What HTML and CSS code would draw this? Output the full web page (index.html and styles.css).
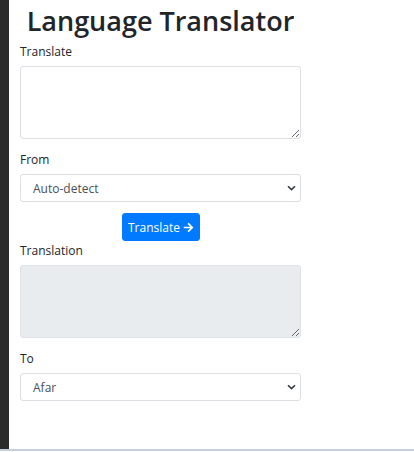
FILE: index.html
```html
<!DOCTYPE html>
<html lang="en">
<head>
<meta charset="utf-8">
<title>Language Translator</title>
<link rel="stylesheet" href="styles.css">
</head>
<body>
<div class="frame">
  <div class="sidebar"></div>
  <main class="content">
    <h1 class="title">Language Translator</h1>
    <div class="group">
      <label class="label">Translate</label>
      <textarea class="field area"></textarea>
    </div>
    <div class="group">
      <label class="label">From</label>
      <div class="select">
        <span>Auto-detect</span>
        <svg class="chev" width="9" height="6" viewBox="0 0 9 6"><path d="M1 1.2 L4.5 4.6 L8 1.2" fill="none" stroke="#343a40" stroke-width="1.6"/></svg>
      </div>
    </div>
    <div class="btnrow">
      <button class="btn">Translate
        <svg class="arrow" width="11" height="11" viewBox="0 0 448 512"><path fill="#fff" d="M190.5 66.9l22.2-22.2c9.4-9.4 24.6-9.4 33.9 0L441 239c9.4 9.4 9.4 24.6 0 33.9L246.6 467.3c-9.4 9.4-24.6 9.4-33.9 0l-22.2-22.2c-9.5-9.5-9.3-25 .4-34.3L311.4 296H24c-13.3 0-24-10.7-24-24v-32c0-13.3 10.7-24 24-24h287.4L190.9 101.2c-9.8-9.3-10-24.8-.4-34.3z"/></svg>
      </button>
    </div>
    <div class="group">
      <label class="label">Translation</label>
      <textarea class="field area disabled" disabled></textarea>
    </div>
    <div class="group">
      <label class="label">To</label>
      <div class="select">
        <span>Afar</span>
        <svg class="chev" width="9" height="6" viewBox="0 0 9 6"><path d="M1 1.2 L4.5 4.6 L8 1.2" fill="none" stroke="#343a40" stroke-width="1.6"/></svg>
      </div>
    </div>
  </main>
</div>
<div class="bottomline"></div>
</body>
</html>
```
FILE: styles.css
```css
html, body {
  margin: 0;
  padding: 0;
  background: #fff;
}
body {
  width: 414px;
  height: 452px;
  overflow: hidden;
  font-family: "Open Sans", "Noto Sans", sans-serif;
  color: #212529;
}
.frame {
  display: flex;
  height: 449px;
}
.sidebar {
  width: 9px;
  background: #2b2b2b;
  flex: none;
}
.content {
  width: 281px;
  padding-left: 11px;
  display: flex;
  flex-direction: column;
}
.title {
  margin: 0;
  font-size: 27px;
  font-weight: 600;
  line-height: 42px;
  height: 43px;
  text-align: center;
  white-space: nowrap;
}
.group {
  display: flex;
  flex-direction: column;
}
.label {
  font-size: 12px;
  line-height: 18px;
  height: 18px;
  margin-bottom: 5px;
}
.field {
  box-sizing: border-box;
  width: 281px;
  border: 1px solid #dcdfe3;
  border-radius: 3px;
  background: #fff;
  margin: 0;
  padding: 0;
  font: inherit;
}
.area {
  height: 73px;
  resize: vertical;
  margin-bottom: 12px;
}
.area.disabled {
  background: #e9ecef;
  border-color: #dfe2e6;
}
.select {
  box-sizing: border-box;
  width: 281px;
  height: 28px;
  border: 1px solid #dcdfe3;
  border-radius: 3px;
  display: flex;
  align-items: center;
  justify-content: space-between;
  padding: 0 4px 0 12px;
  font-size: 12px;
  color: #495057;
}
.chev {
  display: block;
}
.btnrow {
  display: flex;
  justify-content: center;
  margin-top: 11px;
  margin-bottom: 1px;
  height: 28px;
}
.btn {
  box-sizing: border-box;
  width: 78px;
  height: 28px;
  background: #007bff;
  border: 1px solid #007bff;
  border-radius: 3px;
  color: #fff;
  font: inherit;
  font-size: 12px;
  display: flex;
  align-items: center;
  justify-content: center;
  gap: 3px;
  padding: 0;
  margin-left: 1px;
}
.arrow {
  display: block;
}
.bottomline {
  height: 2px;
  background: #c5cfdd;
  width: 414px;
}
```
